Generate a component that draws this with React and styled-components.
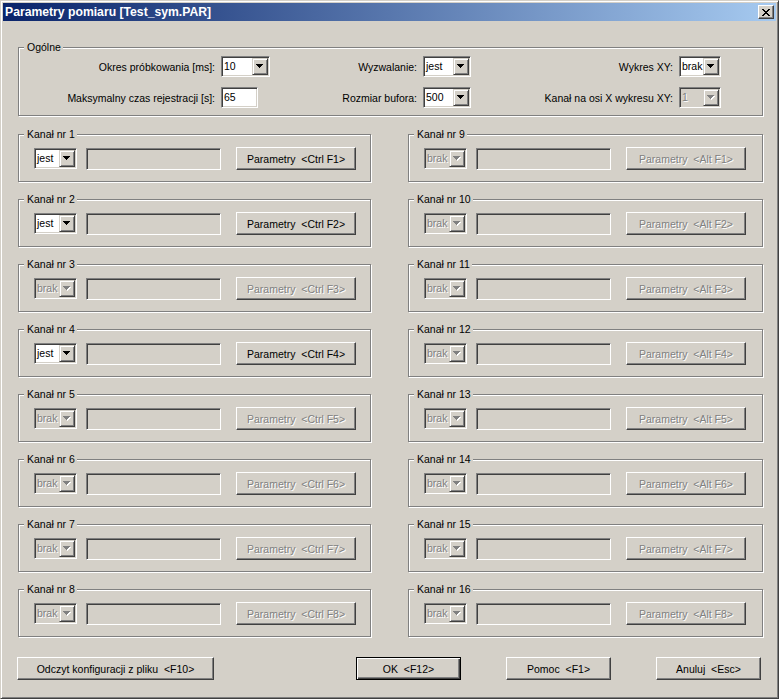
import React from "react";
import styled, { createGlobalStyle, css } from "styled-components";

// Windows classic dialog: "Parametry pomiaru"

const FACE = "#D4D0C8";

const GlobalStyle = createGlobalStyle`
  html, body {
    margin: 0;
    padding: 0;
    background: ${FACE};
  }
  body {
    font-family: "Liberation Sans", Arial, sans-serif;
    font-size: 10.5px;
    color: #000;
  }
`;

const sunken = css`
  box-sizing: border-box;
  border: 1px solid;
  border-color: #808080 #fff #fff #808080;
  box-shadow: inset 1px 1px 0 #404040, inset -1px -1px 0 ${FACE};
`;

const raised = css`
  box-sizing: border-box;
  border: 1px solid;
  border-color: #fff #404040 #404040 #fff;
  box-shadow: inset -1px -1px 0 #808080;
  background: ${FACE};
`;

const disabledText = css`
  color: #808080;
  text-shadow: 1px 1px 0 #fff;
`;

const Window = styled.div`
  width: 779px;
  height: 699px;
  box-sizing: border-box;
  border: 1px solid;
  border-color: ${FACE} #404040 #404040 ${FACE};
  box-shadow: inset 1px 1px 0 #fff, inset -1px -1px 0 #808080;
  padding: 2px;
  background: ${FACE};
  display: flex;
  flex-direction: column;
`;

const TitleBar = styled.div`
  height: 18px;
  background: linear-gradient(to right, #0a246a, #a6caf0);
  display: flex;
  align-items: center;
  justify-content: space-between;
  padding: 0 2px 0 2px;
`;

const Title = styled.span`
  color: #fff;
  font-family: "Liberation Sans", Arial, sans-serif;
  font-weight: bold;
  font-size: 12.2px;
  line-height: 18px;
  white-space: nowrap;
`;

const CloseButton = styled.div`
  ${raised};
  width: 16px;
  height: 14px;
  display: flex;
  align-items: center;
  justify-content: center;
`;

const Body = styled.div`
  display: flex;
  flex-direction: column;
  padding: 26px 13px 0 15px;
`;

const Group = styled.div`
  box-sizing: border-box;
  border: 1px solid #808080;
  box-shadow: 1px 1px 0 #fff, inset 1px 1px 0 #fff;
  display: flex;
  flex-direction: column;
`;

const ChannelGroup = styled(Group)`
  height: 48px;
`;

const Legend = styled.div`
  align-self: flex-start;
  margin: -7px 0 0 5px;
  padding: 0 2px 0 3px;
  height: 13px;
  line-height: 13px;
  background: ${FACE};
  white-space: nowrap;
`;

const GeneralGrid = styled.div`
  display: grid;
  grid-template-columns: 196px 49px 141px 48px 196px 42px;
  grid-auto-rows: 21px;
  column-gap: 6px;
  row-gap: 10px;
  align-items: center;
  margin: 2px 0 7px 0;
`;

const Label = styled.span`
  text-align: right;
  white-space: nowrap;
`;

const ComboBox = styled.div`
  ${sunken};
  width: ${(p) => p.$w}px;
  height: 21px;
  padding: 1px;
  display: flex;
  background: ${(p) => (p.$disabled ? FACE : "#fff")};
  justify-self: start;
`;

const ComboValue = styled.span`
  flex: 1;
  padding-left: 1px;
  line-height: 17px;
  overflow: hidden;
  white-space: nowrap;
  ${(p) => p.$disabled && disabledText};
`;

const ComboArrow = styled.div`
  ${raised};
  box-shadow: inset 1px 1px 0 #fff, inset -1px -1px 0 #808080;
  border-color: ${FACE} #404040 #404040 ${FACE};
  flex: none;
  width: 16px;
  height: 17px;
  display: flex;
  align-items: center;
  justify-content: center;
`;

const TextField = styled.div`
  ${sunken};
  width: ${(p) => p.$w}px;
  height: ${(p) => p.$h}px;
  padding: 0 2px;
  line-height: ${(p) => p.$h - 2}px;
  background: ${(p) => p.$bg};
  justify-self: start;
`;

const ChannelGrid = styled.div`
  display: grid;
  grid-template-columns: 353px 355px;
  grid-template-rows: repeat(8, 48px);
  grid-auto-flow: column;
  column-gap: 37px;
  row-gap: 17px;
  margin-top: 18px;
`;

const ChannelRow = styled.div`
  display: flex;
  align-items: center;
  height: 23px;
  margin-top: 6px;
  padding-left: 15px;
`;

const Button = styled.div`
  ${raised};
  width: ${(p) => p.$w}px;
  height: ${(p) => p.$h || 23}px;
  margin-left: ${(p) => p.$ml || 0}px;
  display: flex;
  align-items: center;
  justify-content: center;
  white-space: pre;
  ${(p) => p.$disabled && disabledText};
  ${(p) =>
    p.$default &&
    css`
      border: 1px solid #000;
      box-shadow: inset 1px 1px 0 #fff, inset -1px -1px 0 #404040,
        inset -2px -2px 0 #808080;
    `};
`;

const Footer = styled.div`
  display: flex;
  margin: 20px 0 0 -1px;
  width: 744px;
`;

const FooterRight = styled.div`
  display: flex;
  gap: 45px;
  margin-left: auto;
`;

function Arrow({ disabled }) {
  const d = "M0 0h7v1H0z M1 1h5v1H1z M2 2h3v1H2z M3 3h1v1H3z";
  return (
    <svg width="8" height="5" viewBox="0 0 8 5" shapeRendering="crispEdges">
      {disabled && <path d={d} fill="#fff" transform="translate(1 1)" />}
      <path d={d} fill={disabled ? "#808080" : "#000"} />
    </svg>
  );
}

function Combo({ w, value, disabled }) {
  return (
    <ComboBox $w={w} $disabled={disabled}>
      <ComboValue $disabled={disabled}>{value}</ComboValue>
      <ComboArrow>
        <Arrow disabled={disabled} />
      </ComboArrow>
    </ComboBox>
  );
}

function CloseIcon() {
  return (
    <svg width="8" height="7" viewBox="0 0 8 7" shapeRendering="crispEdges">
      <path
        d="M0 0h2v1H0z M6 0h2v1H6z M1 1h2v1H1z M5 1h2v1H5z M2 2h4v1H2z M3 3h2v1H3z M2 4h4v1H2z M1 5h2v1H1z M5 5h2v1H5z M0 6h2v1H0z M6 6h2v1H6z"
        fill="#000"
      />
    </svg>
  );
}

function Channel({ n, on, keyLabel }) {
  return (
    <ChannelGroup>
      <Legend>Kanał nr {n}</Legend>
      <ChannelRow>
        <Combo w={43} value={on ? "jest" : "brak"} disabled={!on} />
        <TextField $w={135} $h={22} $bg={FACE} style={{ marginLeft: 9 }} />
        <Button $w={120} $h={23} $ml={15} $disabled={!on}>
          {"Parametry  <" + keyLabel + ">"}
        </Button>
      </ChannelRow>
    </ChannelGroup>
  );
}

const enabled = [1, 2, 4];

export default function App() {
  const left = [1, 2, 3, 4, 5, 6, 7, 8];
  const right = [9, 10, 11, 12, 13, 14, 15, 16];

  return (
    <>
      <GlobalStyle />
      <Window>
        <TitleBar>
          <Title>Parametry pomiaru [Test_sym.PAR]</Title>
          <CloseButton>
            <CloseIcon />
          </CloseButton>
        </TitleBar>
        <Body>
          <Group>
            <Legend>Ogólne</Legend>
            <GeneralGrid>
              <Label>Okres próbkowania [ms]:</Label>
              <Combo w={49} value="10" />
              <Label>Wyzwalanie:</Label>
              <Combo w={48} value="jest" />
              <Label>Wykres XY:</Label>
              <Combo w={42} value="brak" />

              <Label>Maksymalny czas rejestracji [s]:</Label>
              <TextField $w={37} $h={21} $bg="#fff">
                65
              </TextField>
              <Label>Rozmiar bufora:</Label>
              <Combo w={48} value="500" />
              <Label>Kanał na osi X wykresu XY:</Label>
              <Combo w={42} value="1" disabled />
            </GeneralGrid>
          </Group>

          <ChannelGrid>
            {left.map((n) => (
              <Channel
                key={n}
                n={n}
                on={enabled.includes(n)}
                keyLabel={"Ctrl F" + n}
              />
            ))}
            {right.map((n) => (
              <Channel key={n} n={n} on={false} keyLabel={"Alt F" + (n - 8)} />
            ))}
          </ChannelGrid>

          <Footer>
            <Button $w={197}>{"Odczyt konfiguracji z pliku  <F10>"}</Button>
            <FooterRight>
              <Button $w={105} $default>
                {"OK  <F12>"}
              </Button>
              <Button $w={105}>{"Pomoc  <F1>"}</Button>
              <Button $w={105}>{"Anuluj  <Esc>"}</Button>
            </FooterRight>
          </Footer>
        </Body>
      </Window>
    </>
  );
}
